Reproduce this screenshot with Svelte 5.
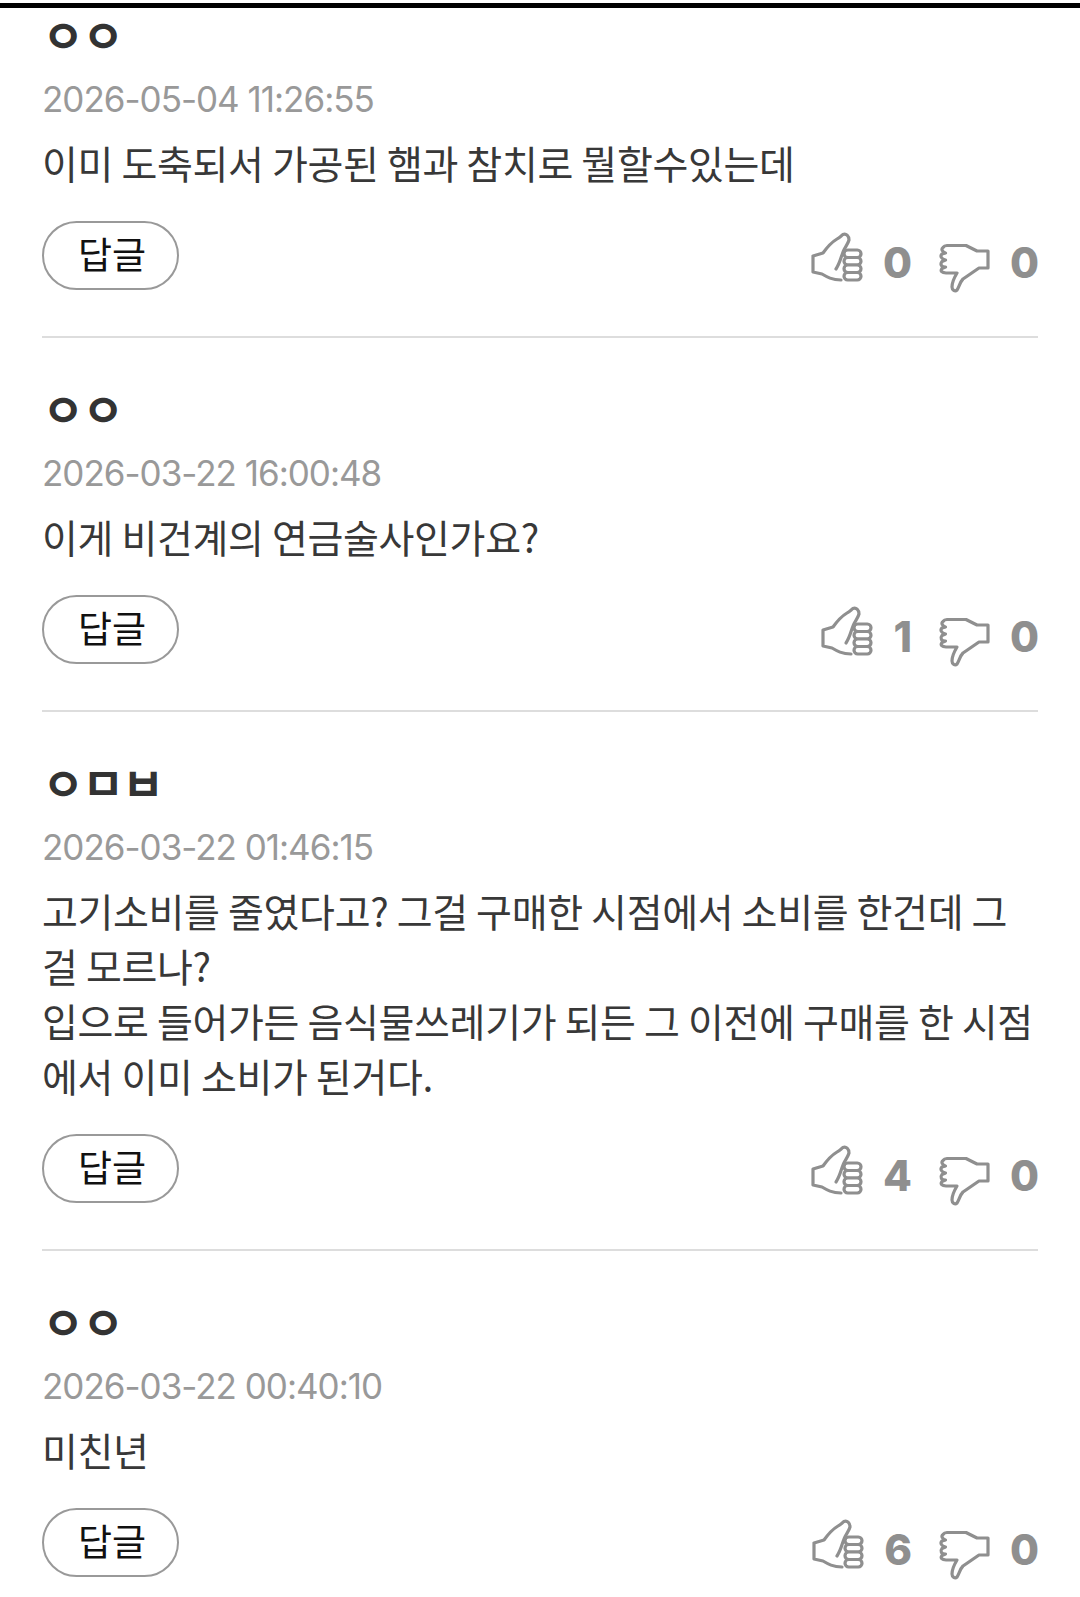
<script>
  const comments = [
    { name: 'ㅇㅇ', date: '2026-05-04 11:26:55', text: '이미 도축되서 가공된 햄과 참치로 뭘할수있는데', up: 0, down: 0 },
    { name: 'ㅇㅇ', date: '2026-03-22 16:00:48', text: '이게 비건계의 연금술사인가요?', up: 1, down: 0 },
    {
      name: 'ㅇㅁㅂ',
      date: '2026-03-22 01:46:15',
      text: '고기소비를 줄였다고? 그걸 구매한 시점에서 소비를 한건데 그걸 모르나?\n입으로 들어가든 음식물쓰레기가 되든 그 이전에 구매를 한 시점에서 이미 소비가 된거다.',
      up: 4,
      down: 0
    },
    { name: 'ㅇㅇ', date: '2026-03-22 00:40:10', text: '미친년', up: 6, down: 0 }
  ];
</script>

<div class="page">
  <div class="top-bar"></div>
  <div class="list">
    {#each comments as c}
      <div class="comment">
        <div class="name">{c.name}</div>
        <div class="date">{c.date}</div>
        <p class="text">{c.text}</p>
        <div class="actions">
          <button type="button" class="reply">답글</button>
          <div class="votes">
            <svg class="icon up" viewBox="0 0 50 50" width="50" height="50" fill="none">
              <path d="M1 23V39L10 41C15 44 20 47 29 47M1 23L11 20C16 13 20 9 25 6C28 4 29 3 31 1.500C34 0 37 3 37 7C36 11 33 14 31 19C29 24 28 30 24 36" />
              <rect x="32" y="17" width="17" height="7.500" rx="3.700" />
              <rect x="32" y="24.500" width="17" height="7.500" rx="3.700" />
              <rect x="32" y="32" width="17" height="7.500" rx="3.700" />
              <rect x="32" y="39.500" width="17" height="7.500" rx="3.700" />
            </svg>
            <span class="count">{c.up}</span>
            <svg class="icon down" viewBox="0 0 50 50" width="50" height="50" fill="none">
              <path d="M8 1.500H27L38 7H49V24H40L24 35C21 38 20 43 18 46C16 48 13 46 13 43C13 39 15 34 18 29H7C3 29 1 27 3 24.500L6.500 23C2 23 1 20 3 17.500L6.500 16C2 15 1 12 3 10L6.500 9C3 8 2 5 4 3.500C5 2 6 1.500 8 1.500Z" />
            </svg>
            <span class="count">{c.down}</span>
          </div>
        </div>
      </div>
    {/each}
  </div>
</div>

<style>
  :global(body) {
    background: #fff;
  }

  .page {
    height: 1597px;
    overflow: hidden;
    padding-top: 3px;
    box-sizing: border-box;
    font-family: "Noto Sans CJK KR", "Noto Sans", sans-serif;
  }

  .top-bar {
    height: 5px;
    background: #000;
  }

  .list {
    padding: 0 42px;
    margin-top: -44px;
  }

  .comment {
    padding-top: 41px;
    padding-bottom: 44px;
    border-bottom: 2px solid #ddd;
  }

  .comment:last-child {
    border-bottom: none;
  }

  .name {
    font-size: 46px;
    line-height: 56px;
    font-weight: 700;
    color: #333;
    letter-spacing: -2.300px;
  }

  .date {
    margin-top: 10px;
    font-family: Inter, sans-serif;
    font-size: 35px;
    line-height: 56px;
    color: #999;
    letter-spacing: -1px;
  }

  .text {
    margin: 8px 0 0;
    font-size: 39px;
    line-height: 55px;
    color: #383838;
    letter-spacing: -0.350px;
    word-break: break-all;
    white-space: pre-line;
  }

  .actions {
    display: flex;
    justify-content: space-between;
    align-items: flex-start;
    margin-top: 31px;
  }

  .reply {
    width: 137px;
    height: 69px;
    padding: 0 0 6px 3px;
    box-sizing: border-box;
    background: #fff;
    border: 2px solid #999;
    border-radius: 35px;
    font-family: inherit;
    font-size: 37px;
    color: #111;
  }

  .votes {
    display: flex;
    align-items: center;
    margin-top: 13px;
    margin-right: -1px;
    height: 58px;
  }

  .icon {
    stroke: #8f8f8f;
    stroke-width: 3.200;
    stroke-linejoin: round;
    stroke-linecap: round;
    overflow: visible;
  }

  .icon rect {
    fill: #fff;
  }

  .icon.up {
    margin-bottom: 10px;
  }

  .icon.down {
    margin-left: 27px;
    margin-top: 12px;
  }

  .count {
    margin-left: 21px;
    font-family: Inter, sans-serif;
    font-weight: 800;
    font-size: 42px;
    line-height: 58px;
    color: #8f8f8f;
  }
</style>
